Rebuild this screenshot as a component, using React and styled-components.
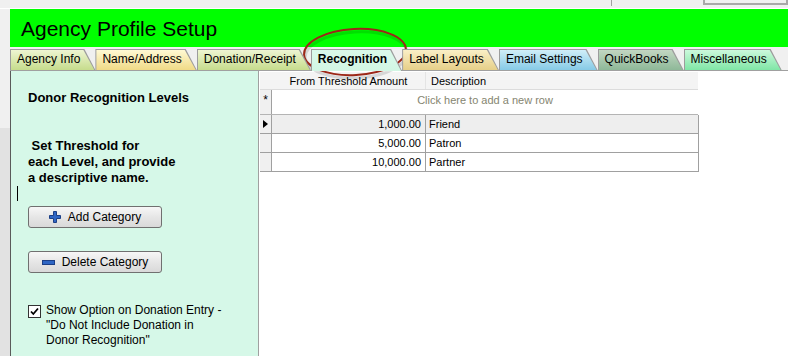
import React from 'react';
import styled, { createGlobalStyle } from 'styled-components';

const GlobalStyle = createGlobalStyle`
    html, body {
        margin: 0;
        padding: 0;
        background: #f0f0f0;
    }
    body {
        font-family: "Liberation Sans", Arial, sans-serif;
        color: #000;
    }
`;

const Page = styled.div`
    position: relative;
    width: 788px;
    height: 356px;
    overflow: hidden;
    display: flex;
    flex-direction: column;
`;

const TopStrip = styled.div`
    height: 8px;
    border-bottom: 1px solid #fff;
    display: flex;
    align-items: flex-start;
`;

const StripSep = styled.div`
    margin-left: 611px;
    width: 1px;
    height: 6px;
    background: #a0a0a0;
`;

const StripBox = styled.div`
    margin-left: 91px;
    width: 82px;
    height: 3px;
    border: 2px solid #a8a8a8;
    border-top: none;
`;

const TitleRow = styled.div`
    display: flex;
    height: 38px;
`;

const Gutter = styled.div`
    width: 10px;
    flex-shrink: 0;
    background: ${p => p.$shade ? 'linear-gradient(#f0f0f0 57px, #e2e2e2 57px)' : '#f0f0f0'};
`;

const TitleBar = styled.div`
    flex: 1;
    background: #00ff00;
    display: flex;
    align-items: center;
    padding: 1px 0 0 11px;
    font-size: 21px;
`;

const TabRow = styled.div`
    display: flex;
    align-items: flex-end;
    height: 23px;
    margin-left: 10px;
    border-bottom: 1px solid #a0a0a0;
`;

const tabShape = 'polygon(0 0, calc(100% - 11px) 0, 100% 100%, 0 100%)';

const Tab = styled.div`
    position: relative;
    height: ${p => p.$active ? 22 : 21}px;
    margin-bottom: ${p => p.$active ? '-1px' : '0'};
    padding: 0 15px 0 7px;
    font-size: 12px;
    font-weight: ${p => p.$active ? 700 : 400};
    line-height: 21px;
    white-space: nowrap;
    background: #9c9c9c;
    clip-path: ${tabShape};
    z-index: ${p => p.$z};

    &::before {
        content: '';
        position: absolute;
        inset: 1px 1px 0 1px;
        background: linear-gradient(${p => p.$from}, ${p => p.$to});
        clip-path: ${tabShape};
    }
`;

const TabLabel = styled.span`
    position: relative;
`;

const Body = styled.div`
    flex: 1;
    display: flex;
    min-height: 0;
`;

const LeftPanel = styled.div`
    width: 230px;
    flex-shrink: 0;
    background: #d6f8e8;
    border-left: 1px solid #5a5a5a;
    border-right: 1px solid #a0a0a0;
    display: flex;
    flex-direction: column;
    align-items: flex-start;
    padding: 19px 0 0 17px;
`;

const PanelTitle = styled.div`
    font-size: 13px;
    font-weight: 700;
    line-height: 16px;
`;

const PanelNote = styled.div`
    margin-top: 32px;
    font-size: 13px;
    font-weight: 700;
    line-height: 16px;
`;

const Caret = styled.div`
    margin-left: -11px;
    width: 1px;
    height: 15px;
    background: #000;
`;

const Button = styled.button`
    margin-top: ${p => p.$gap}px;
    width: 134px;
    height: 22px;
    display: flex;
    align-items: center;
    justify-content: center;
    gap: 7px;
    padding: 0;
    font-family: inherit;
    font-size: 12px;
    color: #000;
    background: linear-gradient(#f7f7f7, #e6e6e6 50%, #d9d9d9);
    border: 1px solid #707070;
    border-radius: 3px;
`;

const CheckRow = styled.label`
    margin-top: 30px;
    display: flex;
    align-items: flex-start;
    gap: 5px;
    font-size: 12px;
    line-height: 15px;
`;

const Box = styled.span`
    margin-top: 2px;
    width: 11px;
    height: 11px;
    flex-shrink: 0;
    background: #fff;
    border: 1px solid #333;
    display: flex;
    align-items: center;
    justify-content: center;
`;

const GridArea = styled.div`
    flex: 1;
    background: #fff;
    padding: 1px 0 0 1px;
`;

const Row = styled.div`
    display: grid;
    grid-template-columns: 12px 154px 1fr;
    width: 438px;
    height: ${p => p.$h}px;
    background: ${p => p.$bg || '#fff'};
    border-bottom: 1px solid ${p => p.$line || '#a0a0a0'};
    border-right: ${p => p.$edge ? '1px solid #a0a0a0' : 'none'};
    font-size: 11px;
`;

const HeadCell = styled.div`
    display: flex;
    align-items: center;
    justify-content: ${p => p.$center ? 'center' : 'flex-start'};
    padding-left: ${p => p.$center ? 0 : 5}px;
    border-right: 1px solid ${p => p.$line || 'transparent'};
`;

const RowHead = styled.div`
    background: #f0f0f0;
    border-right: 1px solid #a0a0a0;
    display: flex;
    align-items: center;
    justify-content: center;
    padding-bottom: ${p => p.$lift || 0}px;
    font-size: 12px;
`;

const NewRowText = styled.div`
    grid-column: 2 / 4;
    display: flex;
    align-items: center;
    justify-content: center;
    padding-bottom: 4px;
    color: #858570;
`;

const Cell = styled.div`
    display: flex;
    align-items: center;
    justify-content: ${p => p.$right ? 'flex-end' : 'flex-start'};
    padding: 0 4px 0 3px;
    border-right: ${p => p.$right ? '1px solid #a0a0a0' : 'none'};
`;

const Marker = styled.span`
    width: 0;
    height: 0;
    border-top: 4px solid transparent;
    border-bottom: 4px solid transparent;
    border-left: 5px solid #000;
`;

const Ring = styled.svg`
    position: absolute;
    left: 299px;
    top: 25px;
    pointer-events: none;
`;

const PlusIcon = () => (
    <svg width="12" height="12" viewBox="0 0 12 12">
        <path d="M4.5 0.5h3v4h4v3h-4v4h-3v-4h-4v-3h4z" fill="#2f66c4" stroke="#1c3f86" strokeWidth="1"/>
    </svg>
);

const MinusIcon = () => (
    <svg width="13" height="5" viewBox="0 0 13 5">
        <rect x="0.5" y="0.5" width="12" height="4" fill="#2f66c4" stroke="#1c3f86" strokeWidth="1"/>
    </svg>
);

const tabs = [
    { label: 'Agency Info', from: '#eef5d2', to: '#c6dc8c' },
    { label: 'Name/Address', from: '#fff9d4', to: '#f0da86' },
    { label: 'Donation/Receipt', from: '#eef5d2', to: '#c6dc8c' },
    { label: 'Recognition', from: '#daf9ea', to: '#d2f6e4', active: true },
    { label: 'Label Layouts', from: '#faefc6', to: '#e6cf88' },
    { label: 'Email Settings', from: '#d0eef8', to: '#86cae6' },
    { label: 'QuickBooks', from: '#c2d6c2', to: '#8eb898' },
    { label: 'Miscellaneous', from: '#ccf9dc', to: '#80e6a6' },
];

const levels = [
    { amount: '1,000.00', name: 'Friend', current: true },
    { amount: '5,000.00', name: 'Patron' },
    { amount: '10,000.00', name: 'Partner' },
];

export default function App() {
    return (
        <Page>
            <GlobalStyle/>
            <TopStrip>
                <StripSep/>
                <StripBox/>
            </TopStrip>
            <TitleRow>
                <Gutter/>
                <TitleBar>Agency Profile Setup</TitleBar>
            </TitleRow>
            <TabRow>
                {tabs.map((t, i) => (
                    <Tab key={t.label} $from={t.from} $to={t.to} $active={t.active} $z={t.active ? 20 : 10 - i}>
                        <TabLabel>{t.label}</TabLabel>
                    </Tab>
                ))}
            </TabRow>
            <Body>
                <Gutter $shade/>
                <LeftPanel>
                    <PanelTitle>Donor Recognition Levels</PanelTitle>
                    <PanelNote>
                        &nbsp;Set Threshold for<br/>
                        each Level, and provide<br/>
                        a descriptive name.
                    </PanelNote>
                    <Caret/>
                    <Button $gap={5}><PlusIcon/>Add Category</Button>
                    <Button $gap={23}><MinusIcon/>Delete Category</Button>
                    <CheckRow>
                        <Box>
                            <svg width="9" height="9" viewBox="0 0 9 9">
                                <path d="M1 4.5l2.3 2.5L8 1.5" fill="none" stroke="#000" strokeWidth="1.8"/>
                            </svg>
                        </Box>
                        <span>
                            Show Option on Donation Entry -<br/>
                            "Do Not Include Donation in<br/>
                            Donor Recognition"
                        </span>
                    </CheckRow>
                </LeftPanel>
                <GridArea>
                    <Row $h={17} $bg="#f4f4f4" $line="#dcdcdc">
                        <HeadCell/>
                        <HeadCell $center $line="#e4e4e4">From Threshold Amount</HeadCell>
                        <HeadCell>Description</HeadCell>
                    </Row>
                    <Row $h={24} $line="#b4b4b4">
                        <RowHead $lift={4}>*</RowHead>
                        <NewRowText>Click here to add a new row</NewRowText>
                    </Row>
                    {levels.map(l => (
                        <Row key={l.name} $h={18} $bg={l.current ? '#eeeeee' : '#fff'} $edge>
                            <RowHead>{l.current && <Marker/>}</RowHead>
                            <Cell $right>{l.amount}</Cell>
                            <Cell>{l.name}</Cell>
                        </Row>
                    ))}
                </GridArea>
            </Body>
            <Ring width="112" height="54" viewBox="0 0 112 54">
                <ellipse cx="56" cy="28" rx="51" ry="23" fill="none" stroke="rgba(0,0,0,0.12)" strokeWidth="3" transform="rotate(-3 56 28) translate(1 2)"/>
                <ellipse cx="56" cy="27" rx="51" ry="23" fill="none" stroke="#9c2818" strokeWidth="2" transform="rotate(-3 56 27)"/>
            </Ring>
        </Page>
    );
}
